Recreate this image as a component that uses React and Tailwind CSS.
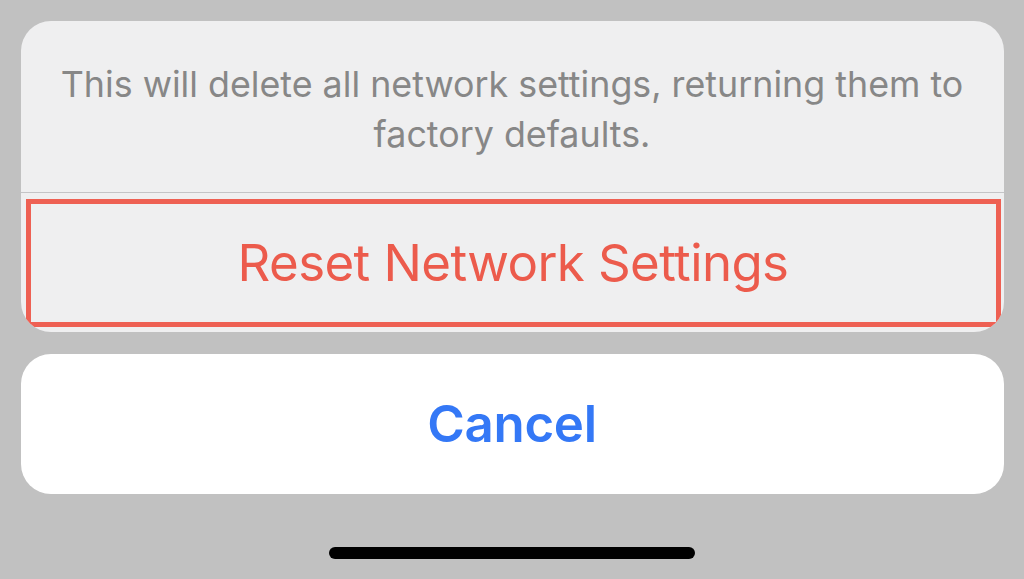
export default function App() {
  return (
    <div
      className="w-[1024px] h-[579px] bg-[#c1c1c1] flex flex-col items-center overflow-hidden"
      style={{ fontFamily: 'Inter, "Noto Sans", sans-serif' }}
    >
      <div className="mt-[21px] w-[983px] h-[311px] rounded-[30px] bg-[#efeff0] flex flex-col overflow-hidden">
        <div className="h-[171px] flex items-center justify-center pt-[4px]">
          <p className="text-center text-[35.8px] leading-[50px] text-[#878787] whitespace-nowrap">
            This will delete all network settings, returning them to
            <br />
            factory defaults.
          </p>
        </div>
        <div className="h-px bg-[#c4c4c6]" />
        <div className="flex-1 pl-[5px] pr-[3px] pt-[6px] pb-[5px] flex">
          <div className="flex-1 border-[5px] border-[#ee6053] flex items-center justify-center">
            <span className="text-[51px] text-[#ec5b4c] tracking-[-0.6px]">Reset Network Settings</span>
          </div>
        </div>
      </div>
      <div className="mt-[22px] w-[983px] h-[140px] rounded-[30px] bg-white flex items-center justify-center">
        <span className="text-[51px] font-semibold text-[#3478f6] tracking-[-0.3px]">Cancel</span>
      </div>
      <div className="mt-[53px] w-[366px] h-[12px] rounded-full bg-black" />
    </div>
  );
}
